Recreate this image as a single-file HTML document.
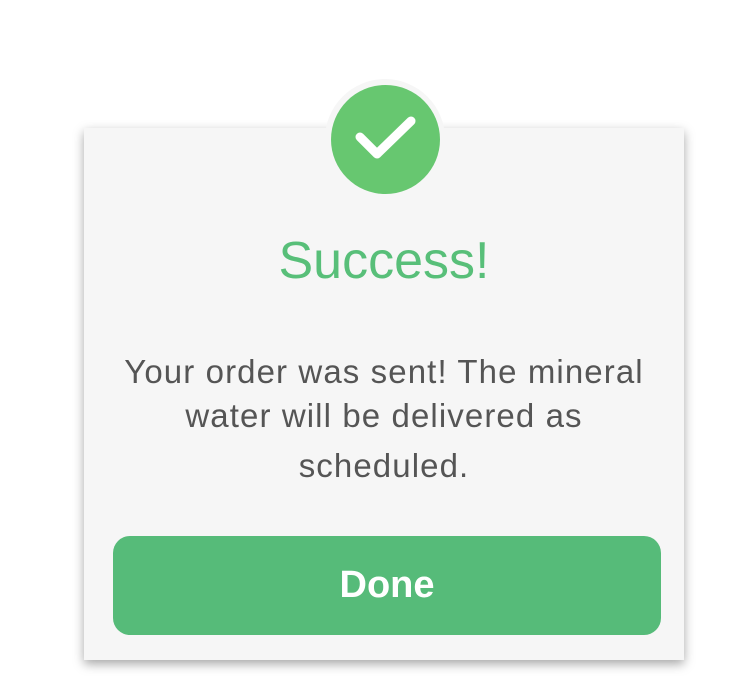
<!DOCTYPE html>
<html><head><style>
body{margin:0;width:750px;height:700px;background:#fff;position:relative;overflow:hidden;font-family:"Liberation Sans",sans-serif}
.card{position:absolute;left:84px;top:128px;width:600px;height:532px;background:#f6f6f6;box-shadow:0 4px 10px rgba(0,0,0,.35)}
.ring{position:absolute;left:325px;top:79px;width:120px;height:120px;border-radius:50%;background:#f6f6f6}
.circ{position:absolute;left:331px;top:85px;width:109px;height:109px;border-radius:50%;background:#67c770}
h1{position:absolute;left:84px;width:600px;top:228px;margin:0;text-align:center;font-weight:normal;font-size:52px;color:#58bf79;line-height:66px}
.msg{position:absolute;left:64px;width:640px;top:350px;text-align:center;font-size:33px;letter-spacing:1.1px;color:#555;line-height:44px}
.btn{position:absolute;left:113px;top:536px;width:548px;height:99px;border-radius:17px;background:#56bb79;color:#fff;font-weight:bold;font-size:38px;text-align:center;line-height:99px}
</style></head><body>
<div class="card"></div>
<div class="ring"></div>
<div class="circ"></div>
<svg style="position:absolute;left:0;top:0" width="750" height="700"><path d="M360 137 L377 154 L411 121" fill="none" stroke="#fff" stroke-width="9" stroke-linecap="round" stroke-linejoin="round"/></svg>
<h1>Success!</h1>
<div class="msg">Your order was sent! The mineral<br>water will be delivered as<br><span style="line-height:56px">scheduled.</span></div>
<div class="btn">Done</div>
</body></html>
